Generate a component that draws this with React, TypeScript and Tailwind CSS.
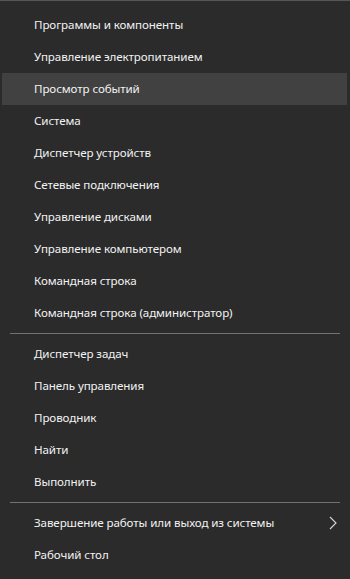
import React from "react";

const groups: string[][] = [
  [
    "Программы и компоненты",
    "Управление электропитанием",
    "Просмотр событий",
    "Система",
    "Диспетчер устройств",
    "Сетевые подключения",
    "Управление дисками",
    "Управление компьютером",
    "Командная строка",
    "Командная строка (администратор)",
  ],
  ["Диспетчер задач", "Панель управления", "Проводник", "Найти", "Выполнить"],
  ["Завершение работы или выход из системы", "Рабочий стол"],
];

const Chevron = () => (
  <svg width="8" height="14" viewBox="0 0 8 14" fill="none" aria-hidden="true">
    <path d="M1 1l6 6-6 6" stroke="#d8d8d8" strokeWidth="1.1" />
  </svg>
);

export default function App() {
  return (
    <div
      className="w-[350px] h-[579px] bg-[#2b2b2b] border-t border-[#565656] pt-2 text-[11.6px] tracking-[-0.1px] text-[#f2f2f2] overflow-hidden"
      style={{ fontFamily: '"Noto Sans", "Open Sans", sans-serif' }}
    >
      {groups.map((items, gi) => (
        <div key={gi}>
          {gi > 0 && <div className="mx-[10px] my-1 h-px bg-[#727272]" />}
          {items.map((label) => {
            const hover = label === "Просмотр событий";
            const sub = label.startsWith("Завершение");
            return (
              <div
                key={label}
                className={`ml-[2px] mr-[3px] h-8 flex items-center pl-8 pr-[10px] ${
                  hover ? "bg-[#414141]" : ""
                }`}
              >
                <span className="flex-1">{label}</span>
                {sub && <Chevron />}
              </div>
            );
          })}
        </div>
      ))}
    </div>
  );
}
